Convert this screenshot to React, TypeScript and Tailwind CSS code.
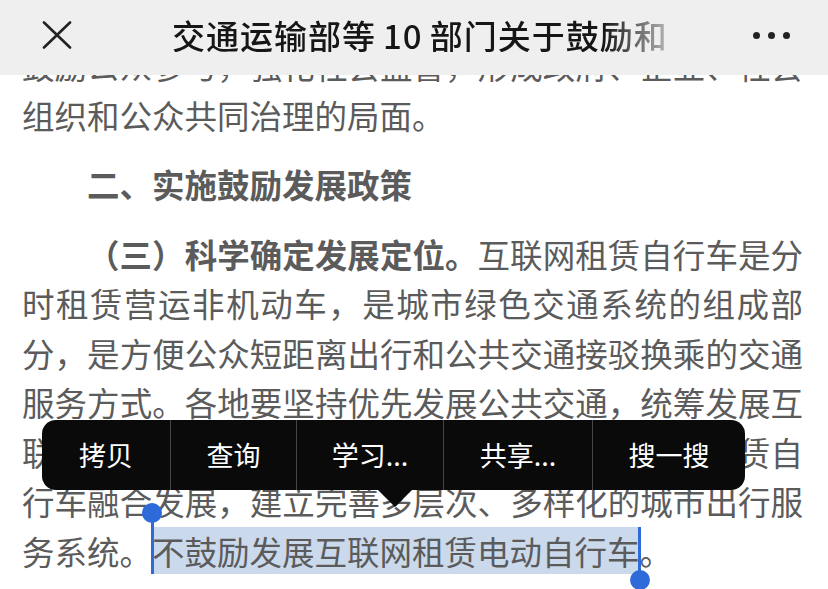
const menuItems = [
  { label: "拷贝", width: "w-[128px]" },
  { label: "查询", width: "w-[126px]" },
  { label: "学习...", width: "w-[147px]" },
  { label: "共享...", width: "w-[149px]" },
  { label: "搜一搜", width: "w-[153px]" },
];

function CloseIcon() {
  return (
    <svg width="30" height="28" viewBox="0 0 30 28" fill="none">
      <path
        d="M2 1.5 28 26.5M28 1.5 2 26.5"
        stroke="#222"
        strokeWidth="2.6"
        strokeLinecap="round"
      />
    </svg>
  );
}

function Dots() {
  return (
    <span className="flex items-center gap-2" aria-label="More">
      <i className="block h-[7px] w-[7px] rounded-full bg-[#222]" />
      <i className="block h-[7px] w-[7px] rounded-full bg-[#222]" />
      <i className="block h-[7px] w-[7px] rounded-full bg-[#222]" />
    </span>
  );
}

export default function App() {
  return (
    <div className="relative h-[589px] w-[828px] overflow-hidden bg-white font-['Noto_Sans_CJK_SC',sans-serif]">
      <header className="absolute inset-x-0 top-0 z-10 flex h-[75px] items-center bg-[#efefef] pb-[5px] pl-[42px] pr-[38px]">
        <button className="flex h-7 w-[30px] items-center justify-center" aria-label="Close">
          <CloseIcon />
        </button>
        <div className="ml-[100px] w-[492px] overflow-hidden whitespace-nowrap [mask-image:linear-gradient(to_right,#000_88%,rgba(0,0,0,0.3)_100%)]">
          <h1 className="text-[33px] font-medium leading-none tracking-[1px] text-[#161616]">
            交通运输部等<span className="mx-[7px]">10</span>部门关于鼓励和规范互联网租赁自行车发展的指导意见
          </h1>
        </div>
        <button className="ml-auto">
          <Dots />
        </button>
      </header>

      <article className="w-[828px] pl-[22px] pr-[25px] pt-[40px] text-justify text-[32.5px] leading-[49.5px] text-[#5b5b5b]">
        <p className="mb-[20px]">
          鼓励公众参与，强化社会监督，形成政府、企业、社会组织和公众共同治理的局面。
        </p>
        <p className="mb-[20px] indent-[2em] font-bold">二、实施鼓励发展政策</p>
        <p className="indent-[2em]">
          <strong className="font-bold">（三）科学确定发展定位。</strong>
          互联网租赁自行车是分时租赁营运非机动车，是城市绿色交通系统的组成部分，是方便公众短距离出行和公共交通接驳换乘的交通服务方式。各地要坚持优先发展公共交通，统筹发展互联网租赁自行车，推进互联网租赁自行车与公共租赁自行车融合发展，建立完善多层次、多样化的城市出行服务系统。
          <span className="relative bg-[#cbd9ec]">
            不鼓励发展互联网租赁电动自行车
            <span className="absolute -left-[1.5px] -top-[14px] bottom-0 w-[3px] bg-[#2f6bd8]" />
            <span className="absolute -left-[10.5px] -top-[24px] h-5 w-5 rounded-full bg-[#2f6bd8]" />
            <span className="absolute -right-[1.5px] -bottom-[6px] top-0 w-[3px] bg-[#2f6bd8]" />
            <span className="absolute -bottom-[16px] -right-[10.5px] h-5 w-5 rounded-full bg-[#2f6bd8]" />
          </span>
          。
        </p>
      </article>

      <div className="absolute left-[42px] top-[420px] z-20 flex h-[70px] w-[703px] rounded-[14px] bg-[#0a0a0a] text-[27px] text-white">
        {menuItems.map((item, index) => (
          <button
            key={item.label}
            className={`flex h-full items-center justify-center ${item.width} ${index > 0 ? "border-l border-[#464646]" : ""}`}
          >
            {item.label}
          </button>
        ))}
        <svg
          className="absolute left-[336px] top-full"
          width="34"
          height="17"
          viewBox="0 0 34 17"
        >
          <path d="M0 0h34L17 17z" fill="#0a0a0a" />
        </svg>
      </div>
    </div>
  );
}
